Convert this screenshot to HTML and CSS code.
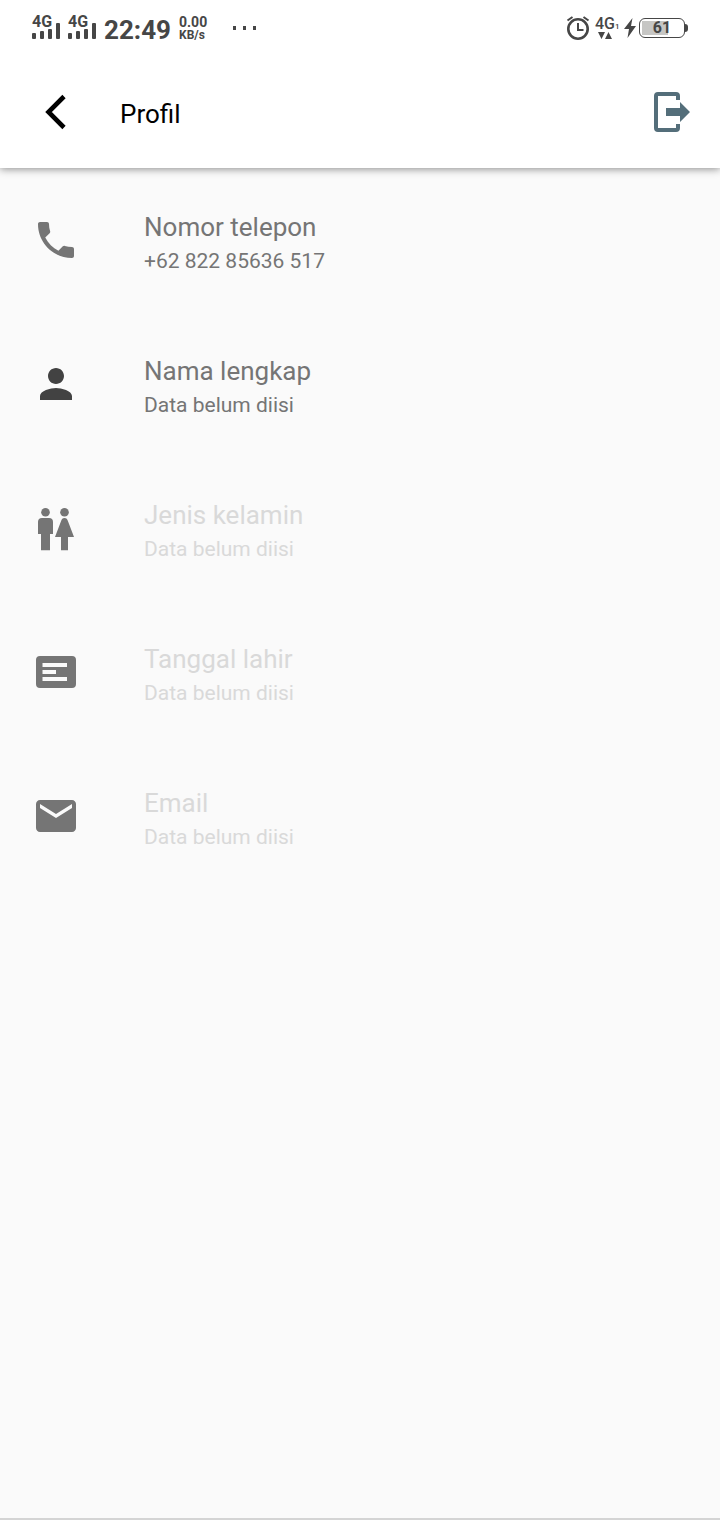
FILE: index.html
```html
<!DOCTYPE html>
<html lang="id">
<head>
<meta charset="utf-8">
<meta name="viewport" content="width=device-width, initial-scale=1">
<title>Profil</title>
<link rel="stylesheet" href="styles.css">
</head>
<body>
<div class="status-bar">
  <div class="status-group">
    <div class="signal">
      <svg class="signal-bars" viewBox="0 0 28 24"><rect x="0" y="17" width="4" height="6" rx="1"/><rect x="8" y="15" width="4" height="8" rx="1"/><rect x="16" y="13" width="4" height="10" rx="1"/><rect x="24" y="7" width="4" height="16" rx="1"/></svg>
      <span class="signal-type">4G</span>
    </div>
    <div class="signal">
      <svg class="signal-bars" viewBox="0 0 28 24"><rect x="0" y="17" width="4" height="6" rx="1"/><rect x="8" y="15" width="4" height="8" rx="1"/><rect x="16" y="13" width="4" height="10" rx="1"/><rect x="24" y="7" width="4" height="16" rx="1"/></svg>
      <span class="signal-type">4G</span>
    </div>
    <time class="clock">22:49</time>
    <div class="speed"><span class="speed-value">0.00</span><span class="speed-unit">KB/s</span></div>
    <svg class="dots" viewBox="0 0 24 4"><rect x="0" width="3" height="4"/><rect x="10" width="3" height="4"/><rect x="20" width="3" height="4"/></svg>
  </div>
  <div class="status-group status-group-end">
    <svg class="alarm" viewBox="0 0 24 26"><circle cx="12" cy="14" r="9.700" fill="none" stroke="currentColor" stroke-width="2.600"/><path d="M12 8v7h5.500M1.500 5.500 6.500 2M22.500 5.500l-5-3.500" fill="none" stroke="currentColor" stroke-width="2"/></svg>
    <div class="network">
      <span class="network-type">4G<span class="network-sim">1</span></span>
      <svg class="network-arrows" viewBox="0 0 14 8"><path d="M0 1h7L3.500 8zM7 8h7L10.500 1z"/></svg>
    </div>
    <svg class="bolt" viewBox="0 0 12 20"><path d="M8.500 0 0 11h5L3.500 20 12 8H7z"/></svg>
    <div class="battery"><span class="battery-level">61</span></div>
  </div>
</div>

<header class="app-bar">
  <button class="icon-button" type="button" aria-label="Kembali">
    <svg class="icon" viewBox="0 0 48 48"><path d="M32 8.500 16.500 24 32 39.500" fill="none" stroke="currentColor" stroke-width="4.600"/></svg>
  </button>
  <h1 class="title">Profil</h1>
  <button class="icon-button logout" type="button" aria-label="Keluar">
    <svg class="icon" viewBox="0 0 48 48"><path d="M32 12V8a2 2 0 0 0-2-2H12a2 2 0 0 0-2 2v32a2 2 0 0 0 2 2h18a2 2 0 0 0 2-2v-4" fill="none" stroke="currentColor" stroke-width="4"/><path d="M20 20h14v-6l10 10-10 10v-6H20z"/></svg>
  </button>
</header>

<main class="content">
  <ul class="list">
    <li><button class="row" type="button">
      <svg class="icon" viewBox="0 0 24 24"><path d="M6.620 10.790c1.440 2.830 3.760 5.140 6.590 6.590l2.200-2.200c.27-.27.67-.36 1.020-.24 1.120.37 2.330.57 3.570.57.55 0 1 .45 1 1V20c0 .55-.45 1-1 1-9.390 0-17-7.610-17-17 0-.55.45-1 1-1h3.500c.55 0 1 .45 1 1 0 1.250.2 2.450.57 3.570.11.35.03.74-.25 1.020z"/></svg>
      <span class="row-text"><span class="label">Nomor telepon</span><span class="value">+62 822 85636 517</span></span>
    </button></li>
    <li><button class="row" type="button">
      <svg class="icon icon-dark" viewBox="0 0 24 24"><path d="M12 12c2.210 0 4-1.790 4-4s-1.790-4-4-4-4 1.790-4 4 1.790 4 4 4zm0 2c-2.670 0-8 1.340-8 4v2h16v-2c0-2.660-5.330-4-8-4z"/></svg>
      <span class="row-text"><span class="label">Nama lengkap</span><span class="value">Data belum diisi</span></span>
    </button></li>
    <li><button class="row" type="button" disabled>
      <svg class="icon" viewBox="0 0 48 48"><circle cx="13.500" cy="8.200" r="4.300"/><circle cx="32.500" cy="8.200" r="4.300"/><path d="M10 14h7a4 4 0 0 1 4 4v12h-3v16.300H9V30H6V18a4 4 0 0 1 4-4zM32.500 14c2 0 2.800 1.200 3.300 2.800L42 33h-6v13.300h-7V33h-6l6.200-16.200c.5-1.600 1.300-2.800 3.300-2.800z"/></svg>
      <span class="row-text"><span class="label">Jenis kelamin</span><span class="value">Data belum diisi</span></span>
    </button></li>
    <li><button class="row" type="button" disabled>
      <svg class="icon" viewBox="0 0 48 48"><path fill-rule="evenodd" d="M8 8h32a4 4 0 0 1 4 4v24a4 4 0 0 1-4 4H8a4 4 0 0 1-4-4V12a4 4 0 0 1 4-4zM10.500 15v4H35v-4zM10.500 22v4H24v-4zM10.500 29v4H35v-4z"/></svg>
      <span class="row-text"><span class="label">Tanggal lahir</span><span class="value">Data belum diisi</span></span>
    </button></li>
    <li><button class="row" type="button" disabled>
      <svg class="icon" viewBox="0 0 24 24"><path d="M20 4H4c-1.100 0-1.990.9-1.990 2L2 18c0 1.100.9 2 2 2h16c1.100 0 2-.9 2-2V6c0-1.100-.9-2-2-2zm0 4-8 5-8-5V6l8 5 8-5v2z"/></svg>
      <span class="row-text"><span class="label">Email</span><span class="value">Data belum diisi</span></span>
    </button></li>
  </ul>
</main>
</body>
</html>
```
FILE: styles.css
```css
* { box-sizing: border-box; }

body {
  margin: 0;
  min-height: 100vh;
  display: flex;
  flex-direction: column;
  background: #fafafa;
  color: #757575;
  font-family: Roboto, "Liberation Sans", sans-serif;
}

svg { display: block; flex: none; fill: currentColor; }

button {
  border: 0;
  padding: 0;
  background: none;
  color: inherit;
  font: inherit;
  text-align: left;
  cursor: pointer;
}

.status-bar {
  height: 56px;
  padding: 0 32px;
  display: flex;
  align-items: center;
  justify-content: space-between;
  background: #fff;
  color: #464646;
  font-weight: 700;
}

.status-group { display: flex; align-items: center; gap: 8px; }
.status-group-end { gap: 5px; }

.signal { display: grid; }
.signal > * { grid-area: 1 / 1; }
.signal-bars { width: 28px; height: 24px; }
.signal-type { font-size: 16px; line-height: 12px; }

.clock { padding-top: 4px; font-size: 26px; line-height: 32px; }

.speed { padding-top: 1px; display: flex; flex-direction: column; }
.speed-value { font-size: 14px; line-height: 13px; }
.speed-unit { font-size: 12px; line-height: 12px; }

.dots { width: 24px; height: 4px; margin-left: 18px; }

.alarm { width: 24px; height: 26px; }
.network { width: 24px; display: flex; flex-direction: column; align-items: flex-start; }
.network-type { height: 14px; font-size: 16px; font-weight: 500; line-height: 14px; white-space: nowrap; }
.network-sim { font-size: 8px; }
.network-arrows { width: 14px; height: 8px; margin-left: 3px; }
.bolt { width: 12px; height: 20px; }

.battery {
  position: relative;
  width: 46px;
  height: 20px;
  margin: 0 3px 0 -2px;
  padding: 2px;
  border: 1px solid #464646;
  border-radius: 6px;
  background: linear-gradient(#c6c6c4, #c6c6c4) 2px 2px / 26px 14px no-repeat;
  font-size: 16px;
  line-height: 14px;
  text-align: center;
}

.battery::after {
  content: "";
  position: absolute;
  top: 5px;
  right: -4px;
  width: 3px;
  height: 8px;
  border-radius: 0 3px 3px 0;
  background: #464646;
}

.app-bar {
  position: relative;
  height: 112px;
  padding: 0 26px 0 32px;
  display: flex;
  align-items: center;
  background: #fff;
  color: #000;
  box-shadow: 0 1px 8px rgba(0, 0, 0, 0.45);
  clip-path: inset(0 0 -16px 0);
}

.title {
  flex: 1;
  margin: 0 0 0 40px;
  padding-top: 4px;
  font-size: 26px;
  font-weight: 400;
  line-height: 32px;
}

.logout { color: #546e7a; }

.icon { width: 48px; height: 48px; }
.icon-dark { color: #424242; }

.content {
  flex: 1;
  border-bottom: 2px solid #d4d4d4;
}

.list { margin: 0; padding: 0; list-style: none; }

.row {
  width: 100%;
  height: 144px;
  padding: 0 32px;
  display: flex;
  align-items: center;
  gap: 64px;
}

.row:disabled { cursor: default; color: #757575; }
.row:disabled .row-text { color: #d9d9d9; }

.row-text { padding-top: 5px; display: flex; flex-direction: column; gap: 5px; }
.label { font-size: 26px; line-height: 32px; }
.value { font-size: 21px; line-height: 26px; }
```
